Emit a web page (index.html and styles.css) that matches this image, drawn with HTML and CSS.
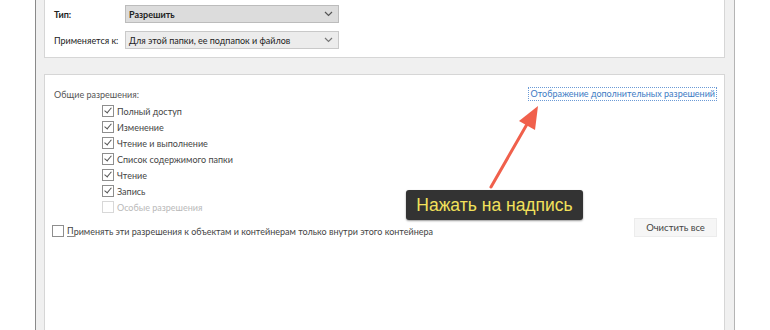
FILE: index.html
```html
<!DOCTYPE html>
<html lang="ru">
<head>
    <meta charset="UTF-8">
    <title>Разрешения</title>
    <link rel="stylesheet" href="styles.css">
</head>
<body>
    <div class="window">
        <div class="top-panel">
            <div class="field-row">
                <span class="field-label bold">Тип:</span>
                <div class="select dark">
                    <span class="bold">Разрешить</span>
                    <svg class="chevron" width="9" height="6" viewBox="0 0 9 6"><path d="M1 1 L4.5 4.5 L8 1" fill="none" stroke="#555" stroke-width="1.2"/></svg>
                </div>
            </div>
            <div class="field-row">
                <span class="field-label">Применяется к:</span>
                <div class="select">
                    <span>Для этой папки, ее подпапок и файлов</span>
                    <svg class="chevron" width="9" height="6" viewBox="0 0 9 6"><path d="M1 1 L4.5 4.5 L8 1" fill="none" stroke="#777" stroke-width="1.2"/></svg>
                </div>
            </div>
        </div>

        <div class="main-panel">
            <div class="head-row">
                <span class="muted">Общие разрешения:</span>
                <a class="more-link" href="#">Отображение дополнительных разрешений</a>
            </div>

            <ul class="perm-list">
                <li><span class="check on"></span>Полный доступ</li>
                <li><span class="check on"></span>Изменение</li>
                <li><span class="check on"></span>Чтение и выполнение</li>
                <li><span class="check on"></span>Список содержимого папки</li>
                <li><span class="check on"></span>Чтение</li>
                <li><span class="check on"></span>Запись</li>
                <li class="disabled"><span class="check"></span>Особые разрешения</li>
            </ul>

            <div class="bottom-row">
                <label class="apply"><span class="check"></span><u>П</u>рименять эти разрешения к объектам и контейнерам только внутри этого контейнера</label>
                <button class="clear-btn">Очистить все</button>
            </div>

            <!-- подсказка поверх окна -->
            <svg class="hint-arrow" width="70" height="100" viewBox="0 0 70 100">
                <line x1="13" y1="90" x2="52" y2="22" stroke="#f0604c" stroke-width="3" stroke-linecap="round"/>
                <polygon points="60,9 57,33 41,24" fill="#f0604c"/>
            </svg>
            <div class="hint">Нажать на надпись</div>
        </div>
    </div>
</body>
</html>
```

FILE: styles.css
```css
body {
    margin: 0;
    background-color: #fff;
    font-family: Lato, "Open Sans", sans-serif;
    font-size: 9px;
    color: #333;
}
.window {
    margin-left: 35px;
    width: 681px;
    height: 330px;
    padding: 0 9px 0 8px;
    background-color: #f0f0f0;
    border-left: 1px solid #8a8a8a;
    border-right: 1px solid #b4b4b4;
    display: flex;
    flex-direction: column;
    gap: 16px;
}
.top-panel {
    height: 52px;
    padding-top: 5px;
    background-color: #fff;
    border: 1px solid #d6d6d6;
    border-top: none;
    display: flex;
    flex-direction: column;
    gap: 8px;
}
.field-row {
    display: flex;
    align-items: center;
    height: 18px;
}
.field-label {
    width: 80px;
    padding-left: 9px;
    box-sizing: border-box;
    white-space: nowrap;
    color: #222;
}
.bold {
    font-weight: bold;
}
.select {
    width: 214px;
    height: 18px;
    box-sizing: border-box;
    border: 1px solid #c9c9c9;
    background-color: #ececec;
    display: flex;
    align-items: center;
    justify-content: space-between;
    padding: 0 5px 0 3px;
    color: #222;
}
.select.dark {
    background-color: #dcdcdc;
    border-color: #bcbcbc;
}
.main-panel {
    flex: 1;
    position: relative;
    background-color: #fff;
    border: 1px solid #d6d6d6;
    border-bottom: none;
    padding: 12px 7px 0 9px;
}
.head-row {
    display: flex;
    justify-content: space-between;
    align-items: center;
    height: 14px;
}
.muted {
    color: #555;
}
.more-link {
    color: #3d7bc4;
    text-decoration: none;
    border: 1px dotted #6a9ad6;
    padding: 0 1px;
    line-height: 12px;
}
.perm-list {
    list-style: none;
    margin: 2px 0 0 48px;
    padding: 0;
}
.perm-list li {
    height: 16px;
    display: flex;
    align-items: center;
    color: #444;
}
.perm-list li.disabled {
    color: #b9b9b9;
}
.check {
    width: 10px;
    height: 10px;
    border: 1px solid #8e8e8e;
    background-color: #fff;
    margin-right: 3px;
    flex: none;
    position: relative;
}
.disabled .check {
    border-color: #d8d8d8;
}
.check.on::after {
    content: "";
    position: absolute;
    left: 3px;
    top: 0px;
    width: 3px;
    height: 6px;
    border-right: 1px solid #555;
    border-bottom: 1px solid #555;
    transform: rotate(40deg);
}
.bottom-row {
    margin-top: 3px;
    display: flex;
    justify-content: space-between;
    align-items: flex-start;
}
.apply {
    display: flex;
    align-items: center;
    margin-top: 7px;
    margin-left: -2px;
    color: #444;
}
.apply u {
    text-decoration: none;
    border-bottom: 1px solid #888;
}
.clear-btn {
    width: 83px;
    height: 19px;
    font-family: inherit;
    font-size: 9.5px;
    color: #444;
    background-color: #f6f6f6;
    border: 1px solid #ececec;
}
.hint-arrow {
    position: absolute;
    left: 433px;
    top: 22px;
}
.hint {
    position: absolute;
    left: 361px;
    top: 115px;
    width: 177px;
    height: 30px;
    line-height: 30px;
    text-align: center;
    background-color: #333;
    border-radius: 3px;
    box-shadow: 0 1px 2px rgba(0, 0, 0, 0.4);
    color: #f2e15b;
    font-family: "Liberation Sans", Arial, sans-serif;
    font-size: 17.5px;
}
```
